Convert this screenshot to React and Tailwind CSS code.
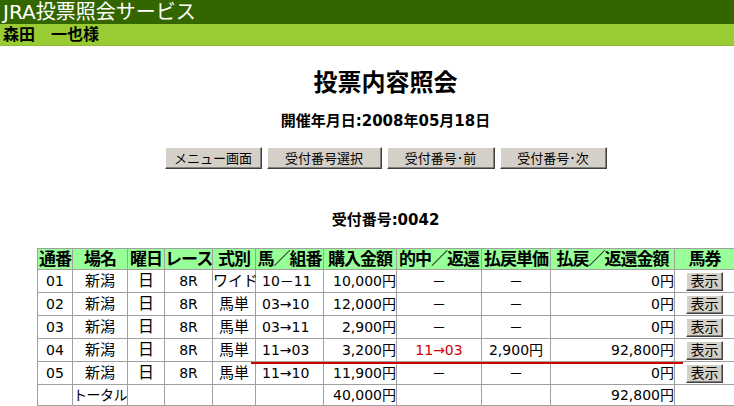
import React from "react";

/* -------------------- DATA -------------------- */

const COLS = [
  { label: "通番", w: 35 },
  { label: "場名", w: 55 },
  { label: "曜日", w: 37 },
  { label: "レース", w: 48 },
  { label: "式別", w: 43 },
  { label: "馬／組番", w: 68 },
  { label: "購入金額", w: 73 },
  { label: "的中／返還", w: 85 },
  { label: "払戻単価", w: 69 },
  { label: "払戻／返還金額", w: 124 },
  { label: "馬券", w: 60 },
];

const ROWS = [
  { no: "01", place: "新潟", day: "日", race: "8R", kind: "ワイド", horse: "10－11", amount: "10,000円", hit: "－", unit: "－", pay: "0円" },
  { no: "02", place: "新潟", day: "日", race: "8R", kind: "馬単", horse: "03→10", amount: "12,000円", hit: "－", unit: "－", pay: "0円" },
  { no: "03", place: "新潟", day: "日", race: "8R", kind: "馬単", horse: "03→11", amount: "2,900円", hit: "－", unit: "－", pay: "0円" },
  { no: "04", place: "新潟", day: "日", race: "8R", kind: "馬単", horse: "11→03", amount: "3,200円", hit: "11→03", unit: "2,900円", pay: "92,800円", win: true },
  { no: "05", place: "新潟", day: "日", race: "8R", kind: "馬単", horse: "11→10", amount: "11,900円", hit: "－", unit: "－", pay: "0円" },
];

const BUTTONS = [
  { label: "メニュー画面", w: "w-[97px]" },
  { label: "受付番号選択", w: "w-[115px]" },
  { label: "受付番号･前", w: "w-[108px]" },
  { label: "受付番号･次", w: "w-[107px]" },
];

const td = "border border-[#a0a0a0] h-[21px] px-1 leading-none text-[14px]";
const btn =
  "bg-[#d4d0c8] leading-none border border-t-white border-l-white border-r-[#404040] border-b-[#404040] shadow-[inset_-1px_-1px_0_#808080]";

/* -------------------- PAGE -------------------- */

const App = () => {
  return (
    <div
      className="w-[734px] h-[406px] bg-white overflow-hidden text-black"
      style={{ fontFamily: '"DejaVu Sans", "Noto Sans CJK JP", sans-serif' }}
    >
      {/* Header */}
      <div className="h-[24px] bg-[#336600] text-white text-[20px] leading-[24px] pl-[3px]">
        JRA投票照会サービス
      </div>
      <div className="h-[22px] bg-[#99cc33] border-b border-[#8fb83a] text-[16px] font-bold leading-[21px] pl-[3px]">
        森田　一也様
      </div>

      <div className="ml-[37px] w-[697px]">
        {/* Title */}
        <h1 className="mt-[22px] text-center text-[24px] font-bold leading-[30px]">投票内容照会</h1>
        <p className="mt-[14px] text-center text-[15px] font-bold leading-[18px]">開催年月日:2008年05月18日</p>

        {/* Buttons */}
        <div className="mt-[17px] flex justify-center gap-[5px]">
          {BUTTONS.map((b) => (
            <button key={b.label} className={`${b.w} h-[22px] text-[13px] ${btn}`}>
              {b.label}
            </button>
          ))}
        </div>

        <p className="mt-[42px] text-center text-[15px] font-bold leading-[18px]">受付番号:0042</p>

        {/* Table */}
        <div className="relative mt-[19px]">
          <table className="w-full border-collapse border border-[#808080] table-fixed">
            <colgroup>
              {COLS.map((c) => (
                <col key={c.label} style={{ width: c.w }} />
              ))}
            </colgroup>
            <thead>
              <tr className="bg-[#99ff99]">
                {COLS.map((c) => (
                  <th
                    key={c.label}
                    className="border border-[#a0a0a0] h-[21px] px-0 leading-none text-[17px] font-bold whitespace-nowrap tracking-[-1px]"
                  >
                    {c.label}
                  </th>
                ))}
              </tr>
            </thead>
            <tbody>
              {ROWS.map((r) => (
                <tr key={r.no} className="h-[23px]">
                  <td className={`${td} text-center`}>{r.no}</td>
                  <td className={`${td} text-center !text-[15px]`}>{r.place}</td>
                  <td className={`${td} text-center !text-[16px]`}>{r.day}</td>
                  <td className={`${td} text-center`}>{r.race}</td>
                  <td className={`${td} text-center !text-[15px] whitespace-nowrap !px-0`}>{r.kind}</td>
                  <td className={`${td} !pl-[6px]`}>{r.horse}</td>
                  <td className={`${td} text-right !pr-0`}>{r.amount}</td>
                  <td className={`${td} text-center ${r.win ? "text-[#cc0000]" : ""}`}>{r.hit}</td>
                  <td className={`${td} text-center`}>{r.unit}</td>
                  <td className={`${td} text-right !pr-0`}>{r.pay}</td>
                  <td className={`${td} text-center`}>
                    <button className={`w-[37px] h-[19px] text-[14px] ${btn}`}>表示</button>
                  </td>
                </tr>
              ))}
              <tr className="h-[21px]">
                <td className={td}></td>
                <td className={`${td} text-left !px-0 whitespace-nowrap tracking-[-0.5px]`}>トータル</td>
                <td className={td}></td>
                <td className={td}></td>
                <td className={td}></td>
                <td className={td}></td>
                <td className={`${td} text-right !pr-0`}>40,000円</td>
                <td className={td}></td>
                <td className={td}></td>
                <td className={`${td} text-right !pr-0`}>92,800円</td>
                <td className={td}></td>
              </tr>
            </tbody>
          </table>
          {/* red line under the winning row */}
          <div className="absolute left-[214px] top-[114px] w-[432px] h-[2px] bg-[#cc0000]" />
        </div>
      </div>
    </div>
  );
};

export default App;
